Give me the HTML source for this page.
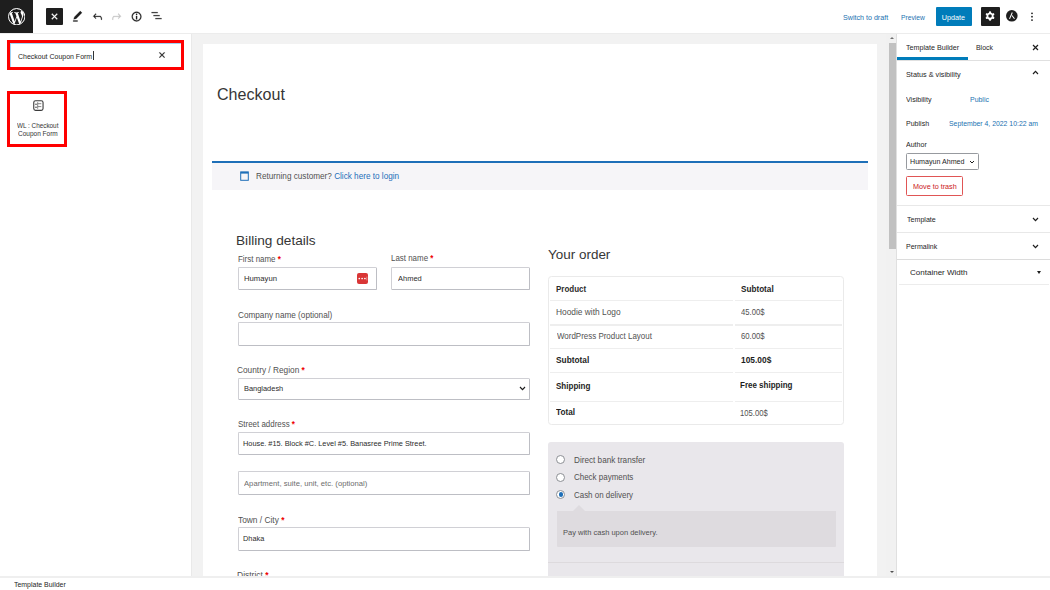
<!DOCTYPE html>
<html><head><meta charset="utf-8"><style>
html,body{margin:0;padding:0;width:1050px;height:590px;overflow:hidden;background:#fff;}
body{position:relative;font-family:"Liberation Sans",sans-serif;}
.r{position:absolute;}
.t{position:absolute;line-height:1;white-space:nowrap;transform-origin:0 0;}
</style></head><body>
<div class="r" style="left:0px;top:0px;width:1050px;height:33px;background:#fff;"></div>
<div class="r" style="left:0px;top:33px;width:1050px;height:1px;background:#ececec;"></div>
<div class="r" style="left:0px;top:0px;width:33px;height:33px;background:#1e1e1e;"></div>
<svg class="r" style="left:7.9px;top:8px" width="17.4" height="17.4" viewBox="0 0 24 24"><circle cx="12" cy="12" r="10.8" fill="#fff"/><path fill="#1e1e1e" d="M21.469 6.825c.84 1.537 1.318 3.3 1.318 5.175 0 3.979-2.156 7.456-5.363 9.325l3.295-9.527c.615-1.540.82-2.771.82-3.864 0-.405-.026-.78-.07-1.11m-7.981.105c.647-.03 1.232-.105 1.232-.105.582-.075.514-.93-.067-.899 0 0-1.755.135-2.88.135-1.064 0-2.85-.15-2.85-.15-.585-.03-.661.855-.075.885 0 0 .54.061 1.125.09l1.68 4.605-2.37 7.08L5.354 6.9c.649-.03 1.234-.1 1.234-.1.585-.075.516-.93-.065-.896 0 0-1.746.138-2.874.138-.2 0-.438-.008-.69-.015C4.911 3.150 8.235 1.215 12 1.215c2.809 0 5.365 1.072 7.286 2.833-.046-.003-.091-.009-.141-.009-1.06 0-1.812.923-1.812 1.914 0 .89.513 1.643 1.06 2.531.411.72.89 1.643.89 2.977 0 .915-.354 1.994-.821 3.479l-1.075 3.585-3.9-11.61.001.014zM12 22.784c-1.059 0-2.081-.153-3.048-.437l3.237-9.406 3.315 9.087c.024.053.05.101.078.149-1.12.393-2.325.609-3.582.609M1.211 12c0-1.564.336-3.050.935-4.390L7.29 21.709C3.694 19.96 1.212 16.271 1.211 12"/><circle cx="12" cy="12" r="11.35" fill="none" stroke="#fff" stroke-width="1.3"/></svg>
<div class="r" style="left:46px;top:7.8px;width:16.8px;height:17.0px;background:#1e1e1e;border-radius:1px;"></div>
<svg class="r" style="left:47.1px;top:8.9px" width="15" height="15" viewBox="0 0 24 24"><path fill="#fff" d="M12 13.06l3.712 3.713 1.061-1.06L13.061 12l3.712-3.712-1.06-1.06L12 10.938 8.288 7.227l-1.061 1.06L10.939 12l-3.712 3.712 1.06 1.061L12 13.061z" stroke="#fff" stroke-width="0.5"/></svg>
<svg class="r" style="left:70.9px;top:10.4px" width="13.125" height="13.125" viewBox="0 0 24 24"><path fill="#1e1e1e" d="M20.1 5.1L16.9 2 6.2 12.7l-1.3 4.4 4.5-1.3L20.1 5.1zM4 20.8h8v-1.5H4v1.5z" stroke="#1e1e1e" stroke-width="0.5"/></svg>
<svg class="r" style="left:90.9px;top:9.6px" width="13.125" height="13.125" viewBox="0 0 24 24"><path fill="#1e1e1e" d="M18.3 11.7c-.6-.6-1.4-.9-2.3-.9H6.7l2.9-3.3-1.1-1-4.5 5L8.5 16l1-1-2.7-2.7H16c.5 0 .9.2 1.3.5 1 1 1 3.4 1 4.5v.3h1.5v-.2c0-1.5 0-4.3-1.5-5.7z" stroke="#1e1e1e" stroke-width="0.5"/></svg>
<svg class="r" style="left:110.3px;top:9.6px" width="13.125" height="13.125" viewBox="0 0 24 24"><path fill="#c4c4c4" d="M15.6 6.5l-1.1 1 2.9 3.3H8c-.9 0-1.7.3-2.3.9-1.4 1.5-1.4 4.2-1.4 5.8v.2h1.5v-.3c0-1.1 0-3.5 1-4.5.3-.3.7-.5 1.3-.5h9.2L14.5 15l1.1 1.1 4.6-4.6-4.6-5z" stroke="#c4c4c4" stroke-width="0.5"/></svg>
<svg class="r" style="left:130.2px;top:9.54px" width="13.125" height="13.125" viewBox="0 0 24 24"><path fill="#1e1e1e" d="M12 3.2c-4.8 0-8.8 3.9-8.8 8.8 0 4.8 3.9 8.8 8.8 8.8 4.8 0 8.8-3.9 8.8-8.8 0-4.8-4-8.8-8.8-8.8zm0 16c-4 0-7.2-3.3-7.2-7.2C4.8 8 8 4.8 12 4.8s7.2 3.3 7.2 7.2c0 4-3.2 7.2-7.2 7.2zM11 17h2v-6h-2v6zm0-8h2V7h-2v2z" stroke="#1e1e1e" stroke-width="0.5"/></svg>
<svg class="r" style="left:150.2px;top:9.3px" width="13.125" height="13.125" viewBox="0 0 24 24"><path fill="#1e1e1e" d="M3 6h11v1.5H3V6Zm3.5 5.5h11V13h-11v-1.5ZM21 17H10v1.5h11V17Z" stroke="#1e1e1e" stroke-width="0.5"/></svg>
<div class="t" id="t0" style="left:842.68px;top:14.11px;font-size:7.2px;color:#2271b1;font-weight:400;transform:scaleX(0.9917);">Switch to draft</div>
<div class="t" id="t1" style="left:901.46px;top:14.11px;font-size:7.2px;color:#2271b1;font-weight:400;transform:scaleX(0.9340);">Preview</div>
<div class="r" style="left:936px;top:7px;width:36px;height:19px;background:#007cba;border-radius:1px;"></div>
<div class="t" id="t2" style="left:941.86px;top:13.91px;font-size:7.2px;color:#fff;font-weight:400;">Update</div>
<div class="r" style="left:980.5px;top:7px;width:19.5px;height:19px;background:#1e1e1e;border-radius:1px;"></div>
<svg class="r" style="left:983.1px;top:9.3px" width="14.2" height="14.2" viewBox="0 0 24 24"><path fill="#fff" fill-rule="evenodd" d="M10.289 4.836A1 1 0 0111.275 4h1.306a1 1 0 01.987.836l.244 1.466c.787.26 1.503.679 2.108 1.218l1.393-.522a1 1 0 011.216.437l.653 1.131a1 1 0 01-.23 1.273l-1.148.944a6.025 6.025 0 010 2.435l1.149.946a1 1 0 01.23 1.272l-.653 1.13a1 1 0 01-1.216.438l-1.394-.522c-.605.54-1.32.958-2.108 1.218l-.244 1.466a1 1 0 01-.987.836h-1.306a1 1 0 01-.986-.836l-.244-1.466a5.995 5.995 0 01-2.108-1.218l-1.394.522a1 1 0 01-1.217-.436l-.653-1.131a1 1 0 01.23-1.273l1.149-.945a6.026 6.026 0 010-2.435l-1.148-.944a1 1 0 01-.23-1.272l.653-1.131a1 1 0 011.217-.437l1.393.522a5.994 5.994 0 012.108-1.218l.244-1.466zM14.929 12a3 3 0 11-6 0 3 3 0 016 0z"/></svg>
<svg class="r" style="left:1006.2px;top:10.2px" width="11.8" height="11.8" viewBox="0 0 12 12"><circle cx="5.9" cy="5.9" r="5.9" fill="#1e1e1e"/><path d="M3.6 9 L6.4 2.6 M6.1 5.6 L8.6 8.9" fill="none" stroke="#fff" stroke-width="1.05"/></svg>
<svg class="r" style="left:1029.7px;top:11.5px" width="4" height="10" viewBox="0 0 4 10"><circle cx="2" cy="1.35" r="0.9" fill="#1e1e1e"/><circle cx="2" cy="4.7" r="0.9" fill="#1e1e1e"/><circle cx="2" cy="8.05" r="0.9" fill="#1e1e1e"/></svg>
<div class="r" style="left:0px;top:34px;width:191px;height:543px;background:#fff;"></div>
<div class="r" style="left:191px;top:34px;width:1.6px;height:543px;background:#e9e9e9;"></div>
<div class="r" style="left:7px;top:40px;width:177px;height:30px;border:3px solid #f00;box-sizing:border-box;"></div>
<div class="r" style="left:10px;top:43px;width:171px;height:24px;border-top:1px solid #9fd3f5;border-left:1px solid #9fd3f5;box-sizing:border-box;background:#fff;"></div>
<div class="t" id="t3" style="left:17.85px;top:52.81px;font-size:7.2px;color:#1e1e1e;font-weight:400;transform:scaleX(0.9719);">Checkout Coupon Form</div>
<div class="r" style="left:93px;top:51.3px;width:0.6px;height:8.7px;background:#333;"></div>
<svg class="r" style="left:154.9px;top:48.05px" width="14" height="14" viewBox="0 0 24 24"><path fill="#1e1e1e" d="M12 13.06l3.712 3.713 1.061-1.06L13.061 12l3.712-3.712-1.06-1.06L12 10.938 8.288 7.227l-1.061 1.06L10.939 12l-3.712 3.712 1.06 1.061L12 13.061z" stroke="#1e1e1e" stroke-width="0.5"/></svg>
<div class="r" style="left:7px;top:91px;width:60px;height:56px;border:3px solid #f00;box-sizing:border-box;"></div>
<svg class="r" style="left:32.5px;top:100px" width="11" height="11" viewBox="0 0 11 11"><rect x="0.75" y="0.75" width="9.3" height="9.6" rx="1.8" fill="none" stroke="#3a3a3a" stroke-width="1.1"/><circle cx="3.0" cy="4.3" r="0.7" fill="#1e1e1e"/><circle cx="3.0" cy="7.2" r="0.7" fill="#1e1e1e"/><path d="M4.7 2.2 V8.8 M4.7 3.7 H8.3 M4.7 6.6 H8.3" stroke="#666" stroke-width="0.8" fill="none"/></svg>
<div class="t" id="t4" style="left:17.00px;top:121.61px;font-size:7.2px;color:#333;font-weight:400;transform:scaleX(0.8835);">WL : Checkout</div>
<div class="t" id="t5" style="left:17.87px;top:129.71px;font-size:7.2px;color:#333;font-weight:400;transform:scaleX(0.9050);">Coupon Form</div>
<div class="r" style="left:192px;top:34px;width:705px;height:543px;background:#f2f2f2;"></div>
<div class="r" style="left:203px;top:43.5px;width:674px;height:533.5px;background:#fff;"></div>
<div class="t" id="t6" style="left:217.20px;top:87.36px;font-size:16px;color:#363636;font-weight:400;transform:scaleX(1.0038);">Checkout</div>
<div class="r" style="left:212px;top:160.5px;width:656px;height:29.0px;background:#f6f5f8;border-top:2px solid #1e6fb8;box-sizing:border-box;"></div>
<svg class="r" style="left:240px;top:171px" width="9" height="10" viewBox="0 0 9 10"><rect x="0.7" y="0.9" width="7.6" height="8.4" fill="none" stroke="#1e6fb8" stroke-width="1"/><rect x="0.7" y="0.9" width="7.6" height="1.7" fill="#1e6fb8"/></svg>
<div class="t" id="t7" style="left:256.05px;top:172.05px;font-size:8.8px;color:#515151;font-weight:400;transform:scaleX(0.9291);">Returning customer? <span style="color:#1e6fb8">Click here to login</span></div>
<div class="t" id="t8" style="left:236.11px;top:234.27px;font-size:13.5px;color:#363636;font-weight:400;transform:scaleX(1.0111);">Billing details</div>
<div class="t" id="t9" style="left:237.56px;top:254.55px;font-size:8.8px;color:#515151;font-weight:400;transform:scaleX(0.9033);">First name <span style="color:#ee0000;font-weight:700">*</span></div>
<div class="r" style="left:238px;top:266.6px;width:138.6px;height:23.2px;border:1px solid #d0d0d5;border-right-color:#bdbec4;border-bottom-color:#bdbec4;border-radius:1.5px;box-sizing:border-box;background:#fff;"></div>
<div class="t" id="t10" style="left:243.68px;top:274.67px;font-size:7.6px;color:#2b2b2b;font-weight:400;transform:scaleX(1.0142);">Humayun</div>
<div class="r" style="left:356.5px;top:272.8px;width:11.5px;height:11.1px;background:#d93636;border-radius:2px;"></div>
<svg class="r" style="left:356.5px;top:273px" width="11.5" height="11" viewBox="0 0 11.5 11"><circle cx="2.3" cy="5.5" r="0.85" fill="#fff"/><circle cx="5.1" cy="5.5" r="0.85" fill="#fff"/><circle cx="7.9" cy="5.5" r="0.85" fill="#fff"/><rect x="9.6" y="3.6" width="0.6" height="3.8" fill="#f4c4c4"/></svg>
<div class="t" id="t11" style="left:391.07px;top:254.45px;font-size:8.8px;color:#515151;font-weight:400;transform:scaleX(0.9018);">Last name <span style="color:#ee0000;font-weight:700">*</span></div>
<div class="r" style="left:391px;top:266.5px;width:139.2px;height:23.5px;border:1px solid #d0d0d5;border-right-color:#bdbec4;border-bottom-color:#bdbec4;border-radius:1.5px;box-sizing:border-box;background:#fff;"></div>
<div class="t" id="t12" style="left:397.80px;top:274.97px;font-size:7.6px;color:#2b2b2b;font-weight:400;transform:scaleX(0.9866);">Ahmed</div>
<div class="t" id="t13" style="left:237.59px;top:310.55px;font-size:8.8px;color:#515151;font-weight:400;transform:scaleX(0.9312);">Company name (optional)</div>
<div class="r" style="left:237.5px;top:322px;width:292.7px;height:24px;border:1px solid #d0d0d5;border-right-color:#bdbec4;border-bottom-color:#bdbec4;border-radius:1.5px;box-sizing:border-box;background:#fff;"></div>
<div class="t" id="t14" style="left:237.28px;top:366.45px;font-size:8.8px;color:#515151;font-weight:400;transform:scaleX(0.9434);">Country / Region <span style="color:#ee0000;font-weight:700">*</span></div>
<div class="r" style="left:237.5px;top:378px;width:292.7px;height:21.5px;border:1px solid #d0d0d5;border-right-color:#bdbec4;border-bottom-color:#bdbec4;border-radius:1.5px;box-sizing:border-box;background:#fff;"></div>
<div class="t" id="t15" style="left:243.91px;top:384.87px;font-size:7.6px;color:#2b2b2b;font-weight:400;transform:scaleX(0.9777);">Bangladesh</div>
<svg class="r" style="left:519px;top:385.5px" width="7" height="5" viewBox="0 0 7 5"><path d="M1 1 L3.5 3.6 L6 1" fill="none" stroke="#1e1e1e" stroke-width="1.2"/></svg>
<div class="t" id="t16" style="left:237.54px;top:420.05px;font-size:8.8px;color:#515151;font-weight:400;transform:scaleX(0.9029);">Street address <span style="color:#ee0000;font-weight:700">*</span></div>
<div class="r" style="left:237.5px;top:432px;width:292.7px;height:23px;border:1px solid #d0d0d5;border-right-color:#bdbec4;border-bottom-color:#bdbec4;border-radius:1.5px;box-sizing:border-box;background:#fff;"></div>
<div class="t" id="t17" style="left:243.41px;top:440.07px;font-size:7.6px;color:#2b2b2b;font-weight:400;transform:scaleX(0.9687);">House. #15. Block #C. Level #5. Banasree Prime Street.</div>
<div class="r" style="left:237.5px;top:471px;width:292.7px;height:23.5px;border:1px solid #d0d0d5;border-right-color:#bdbec4;border-bottom-color:#bdbec4;border-radius:1.5px;box-sizing:border-box;background:#fff;"></div>
<div class="t" id="t18" style="left:244.00px;top:479.87px;font-size:7.6px;color:#6d6d6d;font-weight:400;transform:scaleX(1.0112);">Apartment, suite, unit, etc. (optional)</div>
<div class="t" id="t19" style="left:237.73px;top:515.55px;font-size:8.8px;color:#515151;font-weight:400;transform:scaleX(0.9485);">Town / City <span style="color:#ee0000;font-weight:700">*</span></div>
<div class="r" style="left:237.5px;top:527px;width:292.7px;height:23.5px;border:1px solid #d0d0d5;border-right-color:#bdbec4;border-bottom-color:#bdbec4;border-radius:1.5px;box-sizing:border-box;background:#fff;"></div>
<div class="t" id="t20" style="left:243.41px;top:535.47px;font-size:7.6px;color:#2b2b2b;font-weight:400;transform:scaleX(0.9677);">Dhaka</div>
<div class="t" id="t21" style="left:237.22px;top:570.85px;font-size:8.8px;color:#515151;font-weight:400;transform:scaleX(0.9647);">District <span style="color:#ee0000;font-weight:700">*</span></div>
<div class="t" id="t22" style="left:548.43px;top:247.67px;font-size:13.5px;color:#363636;font-weight:400;transform:scaleX(0.9968);">Your order</div>
<div class="r" style="left:548px;top:276.3px;width:295.5px;height:148.7px;border:1px solid #eaeaea;border-radius:3.5px;box-sizing:border-box;"></div>
<div class="r" style="left:550px;top:300.0px;width:183px;height:1.4px;background:#eeeeee;"></div>
<div class="r" style="left:734.7px;top:300.0px;width:107.3px;height:1.4px;background:#eeeeee;"></div>
<div class="r" style="left:550px;top:324.4px;width:183px;height:1.4px;background:#eeeeee;"></div>
<div class="r" style="left:734.7px;top:324.4px;width:107.3px;height:1.4px;background:#eeeeee;"></div>
<div class="r" style="left:550px;top:347.9px;width:183px;height:1.4px;background:#eeeeee;"></div>
<div class="r" style="left:734.7px;top:347.9px;width:107.3px;height:1.4px;background:#eeeeee;"></div>
<div class="r" style="left:550px;top:371.9px;width:183px;height:1.4px;background:#eeeeee;"></div>
<div class="r" style="left:734.7px;top:371.9px;width:107.3px;height:1.4px;background:#eeeeee;"></div>
<div class="r" style="left:550px;top:400.9px;width:183px;height:1.4px;background:#eeeeee;"></div>
<div class="r" style="left:734.7px;top:400.9px;width:107.3px;height:1.4px;background:#eeeeee;"></div>
<div class="t" id="t23" style="left:556.18px;top:284.55px;font-size:8.8px;color:#2c2c2c;font-weight:700;transform:scaleX(0.9079);">Product</div>
<div class="t" id="t24" style="left:740.80px;top:284.85px;font-size:8.8px;color:#1e1e1e;font-weight:700;transform:scaleX(0.9279);">Subtotal</div>
<div class="t" id="t25" style="left:556.03px;top:308.25px;font-size:8.8px;color:#515151;font-weight:400;transform:scaleX(0.9502);">Hoodie with Logo</div>
<div class="t" id="t26" style="left:740.85px;top:308.15px;font-size:8.8px;color:#515151;font-weight:400;transform:scaleX(0.8708);">45.00$</div>
<div class="t" id="t27" style="left:556.70px;top:332.35px;font-size:8.8px;color:#515151;font-weight:400;transform:scaleX(0.9040);">WordPress Product Layout</div>
<div class="t" id="t28" style="left:740.61px;top:331.95px;font-size:8.8px;color:#515151;font-weight:400;transform:scaleX(0.8795);">60.00$</div>
<div class="t" id="t29" style="left:556.09px;top:355.85px;font-size:8.8px;color:#1e1e1e;font-weight:700;transform:scaleX(0.9454);">Subtotal</div>
<div class="t" id="t30" style="left:740.50px;top:355.55px;font-size:8.8px;color:#1e1e1e;font-weight:700;transform:scaleX(0.9524);">105.00$</div>
<div class="t" id="t31" style="left:556.10px;top:382.25px;font-size:8.8px;color:#1e1e1e;font-weight:700;transform:scaleX(0.9148);">Shipping</div>
<div class="t" id="t32" style="left:740.48px;top:381.45px;font-size:8.8px;color:#1e1e1e;font-weight:700;transform:scaleX(0.9090);">Free shipping</div>
<div class="t" id="t33" style="left:556.22px;top:408.45px;font-size:8.8px;color:#1e1e1e;font-weight:700;transform:scaleX(0.9349);">Total</div>
<div class="t" id="t34" style="left:740.43px;top:408.55px;font-size:8.8px;color:#515151;font-weight:400;transform:scaleX(0.8695);">105.00$</div>
<div class="r" style="left:548px;top:442px;width:295.5px;height:135px;background:#e9e7eb;border-radius:3px 3px 0 0;"></div>
<div class="r" style="left:556px;top:455.1px;width:9px;height:9.0px;background:#fff;border:1px solid #8c8f94;border-radius:50%;box-sizing:border-box;"></div>
<div class="t" id="t35" style="left:573.95px;top:455.85px;font-size:8.8px;color:#515151;font-weight:400;transform:scaleX(0.9294);">Direct bank transfer</div>
<div class="r" style="left:556px;top:472.5px;width:9px;height:9.0px;background:#fff;border:1px solid #8c8f94;border-radius:50%;box-sizing:border-box;"></div>
<div class="t" id="t36" style="left:574.20px;top:473.25px;font-size:8.8px;color:#515151;font-weight:400;transform:scaleX(0.9060);">Check payments</div>
<div class="r" style="left:556px;top:490.2px;width:9px;height:9.0px;background:#fff;border:1px solid #8c8f94;border-radius:50%;box-sizing:border-box;"></div>
<div class="t" id="t37" style="left:574.20px;top:490.95px;font-size:8.8px;color:#515151;font-weight:400;transform:scaleX(0.9016);">Cash on delivery</div>
<div class="r" style="left:558.5px;top:492.2px;width:4.5px;height:4.5px;background:#1e6fb8;border-radius:50%;"></div>
<div class="r" style="left:556.5px;top:510.6px;width:279.0px;height:36.4px;background:#dedbdf;border-radius:0 0 1px 1px;"></div>
<div class="r" style="left:573px;top:505px;width:0;height:0;border-left:6px solid transparent;border-right:6px solid transparent;border-bottom:6px solid #dedbdf;"></div>
<div class="t" id="t38" style="left:563.00px;top:528.93px;font-size:8.0px;color:#515151;font-weight:400;transform:scaleX(0.9382);">Pay with cash upon delivery.</div>
<div class="r" style="left:548px;top:561.9px;width:295.5px;height:1.6px;background:#dddadd;"></div>
<div class="r" style="left:886px;top:34px;width:11px;height:543px;background:#f1f1f1;"></div>
<div class="r" style="left:888.5px;top:43px;width:7.5px;height:205.5px;background:#c1c1c1;"></div>
<div class="r" style="left:889.5px;top:37px;width:0;height:0;border-left:2.5px solid transparent;border-right:2.5px solid transparent;border-bottom:2.2px solid #707070;"></div>
<div class="r" style="left:889.5px;top:570.5px;width:0;height:0;border-left:2.5px solid transparent;border-right:2.5px solid transparent;border-top:2.2px solid #505050;"></div>
<div class="r" style="left:896px;top:34px;width:154px;height:543px;background:#fff;border-left:1px solid #e0e0e0;box-sizing:border-box;"></div>
<div class="t" id="t39" style="left:906.16px;top:43.81px;font-size:7.2px;color:#1e1e1e;font-weight:400;transform:scaleX(0.9927);">Template Builder</div>
<div class="t" id="t40" style="left:976.35px;top:43.81px;font-size:7.2px;color:#1e1e1e;font-weight:400;transform:scaleX(0.9610);">Block</div>
<svg class="r" style="left:1032px;top:43.5px" width="7" height="7" viewBox="0 0 7 7"><path d="M1 1 L6 6 M6 1 L1 6" stroke="#1e1e1e" stroke-width="1.2"/></svg>
<div class="r" style="left:897px;top:57px;width:71px;height:2.5px;background:#007cba;"></div>
<div class="r" style="left:897px;top:59.5px;width:153px;height:1.0px;background:#e0e0e0;"></div>
<div class="t" id="t41" style="left:905.97px;top:70.51px;font-size:7.2px;color:#1e1e1e;font-weight:400;transform:scaleX(1.0132);">Status &amp; visibility</div>
<svg class="r" style="left:1031.5px;top:70px" width="7" height="5" viewBox="0 0 7 5"><path d="M1 4 L3.5 1.3 L6 4" fill="none" stroke="#1e1e1e" stroke-width="1.2"/></svg>
<div class="t" id="t42" style="left:906.20px;top:96.21px;font-size:7.2px;color:#1e1e1e;font-weight:400;transform:scaleX(0.9855);">Visibility</div>
<div class="t" id="t43" style="left:970.34px;top:96.21px;font-size:7.2px;color:#2271b1;font-weight:400;transform:scaleX(0.9653);">Public</div>
<div class="t" id="t44" style="left:905.74px;top:120.01px;font-size:7.2px;color:#1e1e1e;font-weight:400;transform:scaleX(0.9780);">Publish</div>
<div class="t" id="t45" style="left:948.99px;top:120.41px;font-size:7.2px;color:#2271b1;font-weight:400;transform:scaleX(0.9558);">September 4, 2022 10:22 am</div>
<div class="t" id="t46" style="left:906.30px;top:141.21px;font-size:7.2px;color:#1e1e1e;font-weight:400;transform:scaleX(0.9801);">Author</div>
<div class="r" style="left:906px;top:153px;width:73px;height:17px;border:1px solid #979a9f;border-radius:1.5px;box-sizing:border-box;"></div>
<div class="t" id="t47" style="left:910.23px;top:158.01px;font-size:7.2px;color:#1e1e1e;font-weight:400;transform:scaleX(0.9888);">Humayun Ahmed</div>
<svg class="r" style="left:969px;top:159.5px" width="6" height="4" viewBox="0 0 6 4"><path d="M1 1 L3 3 L5 1" fill="none" stroke="#1e1e1e" stroke-width="1"/></svg>
<div class="r" style="left:906px;top:176px;width:57px;height:20px;border:1px solid #e05555;border-radius:1.5px;box-sizing:border-box;"></div>
<div class="t" id="t48" style="left:912.52px;top:183.01px;font-size:7.2px;color:#cc1818;font-weight:400;transform:scaleX(1.0046);">Move to trash</div>
<div class="r" style="left:897px;top:204.5px;width:153px;height:1.0px;background:#e8e8e8;"></div>
<div class="t" id="t49" style="left:906.66px;top:215.61px;font-size:7.2px;color:#1e1e1e;font-weight:400;transform:scaleX(0.9870);">Template</div>
<svg class="r" style="left:1031.5px;top:216.8px" width="7" height="5" viewBox="0 0 7 5"><path d="M1 1 L3.5 3.7 L6 1" fill="none" stroke="#1e1e1e" stroke-width="1.2"/></svg>
<div class="r" style="left:897px;top:232px;width:153px;height:1px;background:#e8e8e8;"></div>
<div class="t" id="t50" style="left:906.24px;top:243.01px;font-size:7.2px;color:#1e1e1e;font-weight:400;transform:scaleX(0.9787);">Permalink</div>
<svg class="r" style="left:1031.5px;top:244px" width="7" height="5" viewBox="0 0 7 5"><path d="M1 1 L3.5 3.7 L6 1" fill="none" stroke="#1e1e1e" stroke-width="1.2"/></svg>
<div class="r" style="left:897px;top:259px;width:153px;height:1px;background:#dcdcdc;"></div>
<div class="t" id="t51" style="left:910.40px;top:268.50px;font-size:7.8px;color:#1e1e1e;font-weight:400;transform:scaleX(1.0280);">Container Width</div>
<div class="r" style="left:1036.5px;top:271px;width:0;height:0;border-left:2px solid transparent;border-right:2px solid transparent;border-top:3px solid #1e1e1e;"></div>
<div class="r" style="left:899px;top:284px;width:150px;height:1px;background:#ececec;"></div>
<div class="r" style="left:0px;top:577px;width:1050px;height:13px;background:#fff;"></div>
<div class="r" style="left:0px;top:576px;width:1050px;height:1.6px;background:#efefef;"></div>
<div class="t" id="t52" style="left:14.26px;top:580.81px;font-size:7.2px;color:#1e1e1e;font-weight:400;transform:scaleX(0.9665);">Template Builder</div>
</body></html>
